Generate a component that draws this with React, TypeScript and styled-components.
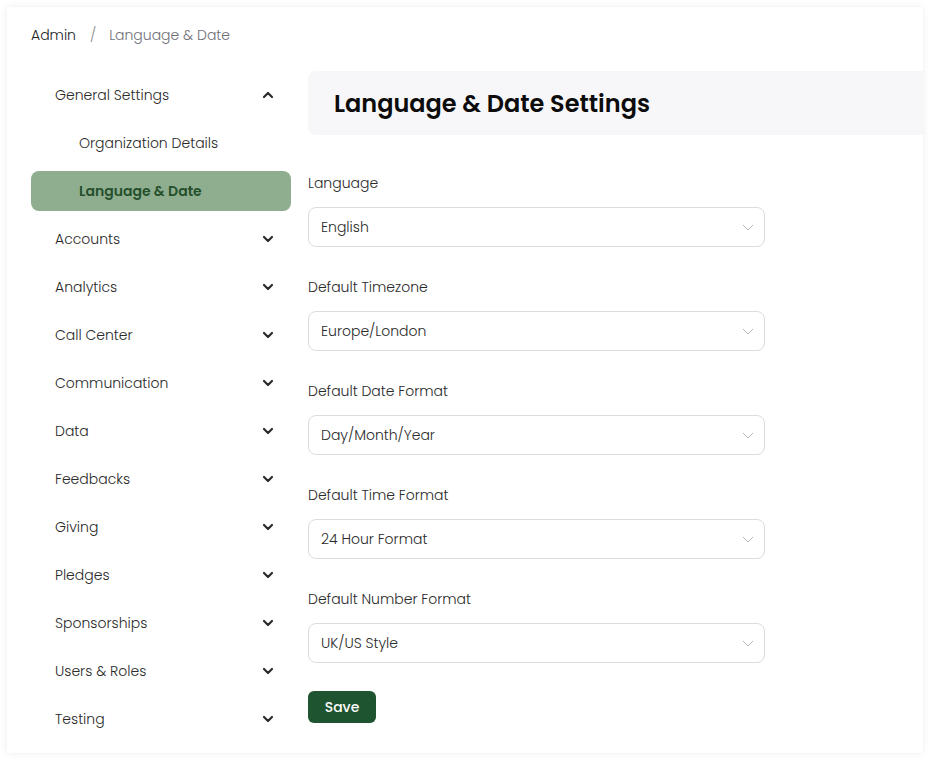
import React from "react";
import styled, { createGlobalStyle } from "styled-components";

const Global = createGlobalStyle`
  html, body { margin: 0; padding: 0; background: #ffffff; }
  body { font-family: "Poppins", "Open Sans", "Noto Sans", sans-serif; color: #333; font-weight: 300; }
  * { box-sizing: border-box; }
`;

const Page = styled.div`
  padding: 7px 8px 8px 7px;
  width: 931px;
  height: 761px;
`;

const Card = styled.div`
  width: 916px;
  height: 746px;
  background: #fff;
  box-shadow: 0 0 8px rgba(0, 0, 0, 0.07);
  padding: 16px 0 0 24px;
  overflow: hidden;
`;

const Breadcrumb = styled.div`
  display: flex;
  align-items: center;
  height: 24px;
  font-size: 14px;
  color: #222;
`;

const Crumb = styled.span<{ $muted?: boolean }>`
  color: ${(p) => (p.$muted ? "#6f6f78" : "#222")};
`;

const Sep = styled.span`
  color: #8a8a92;
  margin: 0 13px 0 14px;
`;

const Body = styled.div`
  display: flex;
  gap: 17px;
  margin-top: 24px;
`;

const Sidebar = styled.nav`
  width: 260px;
  flex: none;
  display: flex;
  flex-direction: column;
`;

const NavRow = styled.div<{ $level?: number; $active?: boolean }>`
  height: 40px;
  margin: 4px 0;
  display: flex;
  align-items: center;
  justify-content: space-between;
  padding-left: ${(p) => (p.$level === 1 ? 48 : 24)}px;
  padding-right: 17px;
  border-radius: 8px;
  font-size: 14px;
  color: ${(p) => (p.$active ? "#24502b" : "#2a2a2a")};
  font-weight: ${(p) => (p.$active ? 600 : 300)};
  background: ${(p) => (p.$active ? "#8fae8f" : "transparent")};
`;

const Main = styled.main`
  flex: 1;
  display: flex;
  flex-direction: column;
`;

const HeaderBox = styled.div`
  height: 64px;
  background: #f7f7f9;
  border-radius: 8px 0 0 8px;
  display: flex;
  align-items: center;
  padding-left: 26px;
  margin-right: -8px;
`;

const Title = styled.h1`
  margin: 0;
  font-size: 24px;
  font-weight: 600;
  color: #0c0c0c;
`;

const Form = styled.div`
  display: flex;
  flex-direction: column;
  margin-top: 38px;
`;

const Field = styled.div`
  display: flex;
  flex-direction: column;
  margin-bottom: 30px;
`;

const Label = styled.label`
  font-size: 14px;
  line-height: 20px;
  color: #2a2a2a;
  margin-bottom: 14px;
`;

const Select = styled.div`
  width: 457px;
  height: 40px;
  border: 1px solid #dcdcdc;
  border-radius: 8px;
  display: flex;
  align-items: center;
  justify-content: space-between;
  padding: 0 10px 0 12px;
  font-size: 14px;
  color: #2a2a2a;
`;

const SaveButton = styled.button`
  width: 68px;
  height: 32px;
  margin-top: -2px;
  border: none;
  border-radius: 6px;
  background: #1f5430;
  color: #fff;
  font-family: inherit;
  font-size: 14px;
  font-weight: 500;
  cursor: pointer;
`;

const Chevron = ({ up }: { up?: boolean }) => (
  <svg width="12" height="8" viewBox="0 0 12 8" fill="none">
    <path
      d={up ? "M2 6 L6 2 L10 6" : "M2 2 L6 6 L10 2"}
      stroke="#2b2b2b"
      strokeWidth="2.2"
      strokeLinecap="round"
      strokeLinejoin="round"
    />
  </svg>
);

const ThinChevron = () => (
  <svg width="12" height="7" viewBox="0 0 12 7" fill="none">
    <path d="M1 1 L6 6 L11 1" stroke="#b4b4b4" strokeWidth="1" />
  </svg>
);

const navItems = [
  "Accounts",
  "Analytics",
  "Call Center",
  "Communication",
  "Data",
  "Feedbacks",
  "Giving",
  "Pledges",
  "Sponsorships",
  "Users & Roles",
  "Testing",
];

const fields = [
  { label: "Language", value: "English" },
  { label: "Default Timezone", value: "Europe/London" },
  { label: "Default Date Format", value: "Day/Month/Year" },
  { label: "Default Time Format", value: "24 Hour Format" },
  { label: "Default Number Format", value: "UK/US Style" },
];

export default function App() {
  return (
    <>
      <Global />
      <Page>
        <Card>
          <Breadcrumb>
            <Crumb>Admin</Crumb>
            <Sep>/</Sep>
            <Crumb $muted>Language &amp; Date</Crumb>
          </Breadcrumb>
          <Body>
            <Sidebar>
              <NavRow>
                <span>General Settings</span>
                <Chevron up />
              </NavRow>
              <NavRow $level={1}>
                <span>Organization Details</span>
              </NavRow>
              <NavRow $level={1} $active>
                <span>Language &amp; Date</span>
              </NavRow>
              {navItems.map((n) => (
                <NavRow key={n}>
                  <span>{n}</span>
                  <Chevron />
                </NavRow>
              ))}
            </Sidebar>
            <Main>
              <HeaderBox>
                <Title>Language &amp; Date Settings</Title>
              </HeaderBox>
              <Form>
                {fields.map((f) => (
                  <Field key={f.label}>
                    <Label>{f.label}</Label>
                    <Select>
                      <span>{f.value}</span>
                      <ThinChevron />
                    </Select>
                  </Field>
                ))}
                <SaveButton>Save</SaveButton>
              </Form>
            </Main>
          </Body>
        </Card>
      </Page>
    </>
  );
}
